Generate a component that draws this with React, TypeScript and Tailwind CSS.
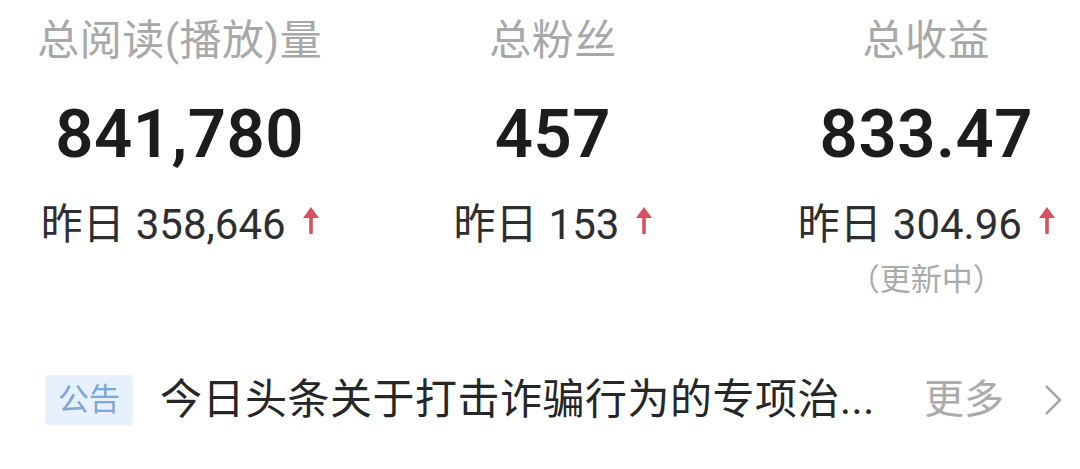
import React from "react";

const Arrow = () => (
  <svg width="16" height="28" viewBox="0 0 16 28" className="ml-[17px] -mt-[8px]">
    <polygon points="8,0 0,11 16,11" fill="#d9505e" />
    <rect x="6.2" y="9" width="3.6" height="18" rx="1" fill="#d9505e" />
  </svg>
);

type Stat = { title: string; value: string; yesterday: string; note?: string };

const stats: Stat[] = [
  { title: "总阅读(播放)量", value: "841,780", yesterday: "358,646" },
  { title: "总粉丝", value: "457", yesterday: "153" },
  { title: "总收益", value: "833.47", yesterday: "304.96", note: "(更新中)" },
];

export default function App() {
  return (
    <div
      className="w-[1080px] h-[469px] bg-white overflow-hidden"
      style={{ fontFamily: 'Roboto, "Noto Sans CJK SC", sans-serif' }}
    >
      <div className="grid grid-cols-3 w-[1120px] -ml-[7px] pt-[17px] h-[345px]">
        {stats.map((s) => (
          <div key={s.title} className="flex flex-col items-center">
            <div className="text-[42px] leading-[48px] text-[#a8a8a8] tracking-[0.5px]">{s.title}</div>
            <div className="mt-[29px] text-[67px] leading-[80px] font-semibold text-[#1c1c1c] tracking-[0.5px]">
              {s.value}
            </div>
            <div className="mt-[27px] flex items-center text-[42px] leading-[48px] text-[#2e2e2e]">
              <span>昨日</span>
              <span className="ml-[11px]">{s.yesterday}</span>
              <Arrow />
            </div>
            {s.note && (
              <div
                className="mt-[8px] text-[31px] leading-[40px] text-[#ababab]"
                style={{ fontFamily: '"Noto Sans CJK SC", sans-serif' }}
              >
                （更新中）
              </div>
            )}
          </div>
        ))}
      </div>
      <div className="flex items-center pl-[45px] pr-[18px] h-[114px] -mt-[2px]">
        <div className="h-[50px] w-[88px] flex items-center justify-center bg-[#e6f1fc] text-[#7ea7d4] text-[31px] rounded-[3px]">
          公告
        </div>
        <div className="ml-[27px] flex-1 text-[42px] leading-[48px] text-[#262626] whitespace-nowrap tracking-[0.5px]">
          今日头条关于打击诈骗行为的专项治...
        </div>
        <div className="text-[40px] leading-[48px] text-[#ababab]">更多</div>
        <svg width="18" height="32" viewBox="0 0 18 32" className="ml-[40px]">
          <polyline points="2,2 16,16 2,30" fill="none" stroke="#a8a8a8" strokeWidth="2.6" />
        </svg>
      </div>
    </div>
  );
}
